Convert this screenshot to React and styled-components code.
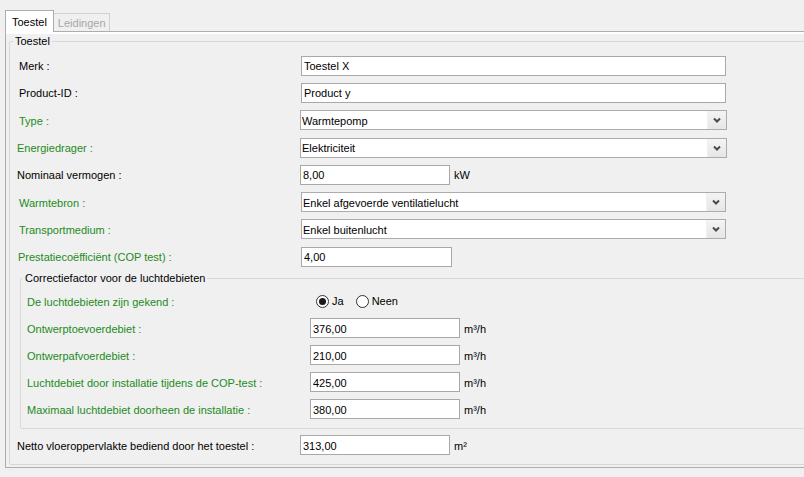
import React from 'react';
import styled, { createGlobalStyle } from 'styled-components';

const GlobalStyle = createGlobalStyle`
  html, body {
    margin: 0;
    padding: 0;
    background: #f0f0f0;
    overflow: hidden;
  }
  body {
    font-family: "Liberation Sans", Arial, sans-serif;
    font-size: 11px;
    color: #000;
  }
`;

const Window = styled.div`
  width: 804px;
  height: 477px;
  padding: 10px 0 0 5px;
  box-sizing: border-box;
  overflow: hidden;
`;

const TabStrip = styled.div`
  display: flex;
  align-items: flex-end;
  height: 21px;
  position: relative;
  z-index: 1;
`;

const Tab = styled.div`
  box-sizing: border-box;
  display: flex;
  align-items: center;
  line-height: 13px;
  height: ${p => (p.$active ? '22px' : '18px')};
  margin-bottom: ${p => (p.$active ? '-1px' : '0')};
  padding: ${p => (p.$active ? '1px 6px 0 6px' : '1px 3px 0 4px')};
  background: ${p => (p.$active ? '#fff' : '#f0f0f0')};
  border: 1px solid ${p => (p.$active ? '#adadad' : '#d2d2d2')};
  border-bottom: ${p => (p.$active ? 'none' : '0')};
  border-left: ${p => (p.$active ? '1px solid #adadad' : 'none')};
  color: ${p => (p.$active ? '#000' : '#a6a6a6')};
`;

const Panel = styled.div`
  width: 830px;
  box-sizing: border-box;
  border: 1px solid #adadad;
  padding: 3px 0 2px 3px;
  box-shadow: inset 0 2px 0 #fff;
`;

const Group = styled.fieldset`
  margin: ${p => p.$margin || '0'};
  padding: 0;
  min-width: 0;
  border: 1px solid #d8d8d8;
  border-radius: 2px;
`;

const Legend = styled.legend`
  margin-left: ${p => p.$offset || 3}px;
  padding: 0 2px;
  line-height: 13px;
`;

const GroupBody = styled.div`
  padding: ${p => p.$pad};
`;

const Row = styled.div`
  display: grid;
  grid-template-columns: ${p => p.$labelWidth}px 1fr;
  align-items: center;
  height: ${p => p.$h || 27}px;
  margin-top: ${p => p.$top || 0}px;
`;

const Label = styled.div`
  padding-left: ${p => p.$indent}px;
  padding-top: 1px;
  color: ${p => (p.$green ? '#228b22' : '#000')};
  white-space: nowrap;
`;

const FieldCell = styled.div`
  display: flex;
  align-items: center;
  padding-left: ${p => p.$offset || 0}px;
`;

const TextBox = styled.div`
  box-sizing: border-box;
  width: ${p => p.$w}px;
  height: 20px;
  border: 1px solid #a8a8a8;
  background: #fff;
  padding: 1px 0 0 2px;
  display: flex;
  align-items: center;
  white-space: nowrap;
`;

const Select = styled.div`
  box-sizing: border-box;
  width: ${p => p.$w}px;
  height: 20px;
  border: 1px solid #acacac;
  background: #fff;
  display: flex;
  align-items: stretch;
`;

const SelectText = styled.div`
  flex: 1;
  padding: 1px 0 0 1px;
  display: flex;
  align-items: center;
  white-space: nowrap;
`;

const DropButton = styled.div`
  width: 18px;
  display: flex;
  align-items: center;
  justify-content: center;
  background: linear-gradient(#f4f4f4, #e6e6e6);
  border-left: 1px solid #f0f0f0;
`;

const Unit = styled.span`
  margin-left: 4px;
  padding-top: 1px;
`;

const Radios = styled.div`
  display: flex;
  align-items: center;
  gap: 12px;
  margin-left: 6px;
`;

const RadioItem = styled.div`
  display: flex;
  align-items: center;
  gap: 3px;
`;

const RadioCircle = styled.div`
  box-sizing: border-box;
  width: 13px;
  height: 13px;
  border-radius: 50%;
  border: 1px solid #333;
  background: #fff;
  display: flex;
  align-items: center;
  justify-content: center;
  &::after {
    content: '';
    width: 7px;
    height: 7px;
    border-radius: 50%;
    background: ${p => (p.$checked ? '#1a1a1a' : 'transparent')};
  }
`;

const Chevron = () => (
  <svg width="8" height="6" viewBox="0 0 8 6">
    <polyline points="1,1.5 4,4.5 7,1.5" fill="none" stroke="#4a4a4a" strokeWidth="2" />
  </svg>
);

const outerRows = [
  { label: 'Merk :', indent: 9, kind: 'text', value: 'Toestel X', w: 425, off: 1 },
  { label: 'Product-ID :', indent: 9, kind: 'text', value: 'Product y', w: 425, off: 1 },
  { label: 'Type :', indent: 9, green: true, kind: 'select', value: 'Warmtepomp', w: 427, off: 0 },
  { label: 'Energiedrager :', indent: 7, green: true, kind: 'select', value: 'Elektriciteit', w: 427, off: 0 },
  { label: 'Nominaal vermogen :', indent: 7, kind: 'text', value: '8,00', w: 150, off: 0, unit: 'kW' },
  { label: 'Warmtebron :', indent: 9, green: true, kind: 'select', value: 'Enkel afgevoerde ventilatielucht', w: 425, off: 1 },
  { label: 'Transportmedium :', indent: 9, green: true, kind: 'select', value: 'Enkel buitenlucht', w: 425, off: 1 },
  { label: 'Prestatiecoëfficiënt (COP test) :', indent: 8, green: true, kind: 'text', value: '4,00', w: 151, off: 1 },
];

const innerRows = [
  { label: 'Ontwerptoevoerdebiet :', value: '376,00' },
  { label: 'Ontwerpafvoerdebiet :', value: '210,00' },
  { label: 'Luchtdebiet door installatie tijdens de COP-test :', value: '425,00' },
  { label: 'Maximaal luchtdebiet doorheen de installatie :', value: '380,00' },
];

const Field = ({ row }) => (
  <FieldCell $offset={row.off}>
    {row.kind === 'select' ? (
      <Select $w={row.w}>
        <SelectText>{row.value}</SelectText>
        <DropButton><Chevron /></DropButton>
      </Select>
    ) : (
      <TextBox $w={row.w}>{row.value}</TextBox>
    )}
    {row.unit && <Unit>{row.unit}</Unit>}
  </FieldCell>
);

export default function App() {
  return (
    <Window>
      <GlobalStyle />
      <TabStrip>
        <Tab $active>Toestel</Tab>
        <Tab>Leidingen</Tab>
      </TabStrip>
      <Panel>
        <Group>
          <Legend $offset={3}>Toestel</Legend>
          <GroupBody $pad="4px 0 5px 0">
            {outerRows.map(r => (
              <Row key={r.label} $labelWidth={290} $h={27.3}>
                <Label $indent={r.indent} $green={r.green}>{r.label}</Label>
                <Field row={r} />
              </Row>
            ))}
            <Group $margin="1.5px 0 0 10px">
              <Legend $offset={2}>Correctiefactor voor de luchtdebieten</Legend>
              <GroupBody $pad="3px 0 5px 0">
                <Row $labelWidth={289}>
                  <Label $indent={6} $green>De luchtdebieten zijn gekend :</Label>
                  <FieldCell>
                    <Radios>
                      <RadioItem><RadioCircle $checked />Ja</RadioItem>
                      <RadioItem><RadioCircle />Neen</RadioItem>
                    </Radios>
                  </FieldCell>
                </Row>
                {innerRows.map(r => (
                  <Row key={r.label} $labelWidth={289}>
                    <Label $indent={6} $green>{r.label}</Label>
                    <Field row={{ kind: 'text', value: r.value, w: 150, unit: 'm³/h' }} />
                  </Row>
                ))}
              </GroupBody>
            </Group>
            <Row $labelWidth={290} $top={3}>
              <Label $indent={7}>Netto vloeroppervlakte bediend door het toestel :</Label>
              <Field row={{ kind: 'text', value: '313,00', w: 150, unit: 'm²' }} />
            </Row>
          </GroupBody>
        </Group>
      </Panel>
    </Window>
  );
}
